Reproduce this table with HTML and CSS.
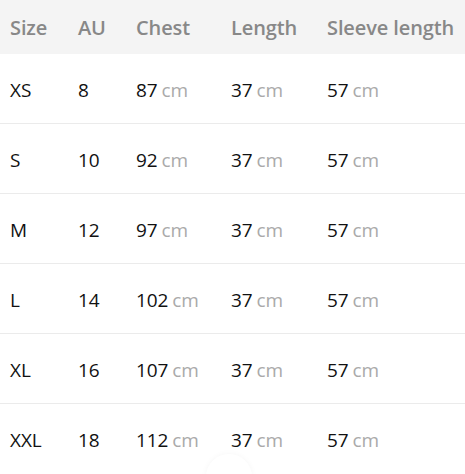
FILE: index.html
```html
<!DOCTYPE html>
<html lang="en">
<head>
    <meta charset="UTF-8">
    <meta name="viewport" content="width=device-width, initial-scale=1.0">
    <title>Size Guide</title>
    <link rel="stylesheet" href="styles.css">
</head>
<body>
    <div class="size-table">
        <div class="row head">
            <div>Size</div>
            <div>AU</div>
            <div>Chest</div>
            <div>Length</div>
            <div>Sleeve length</div>
        </div>
        <div class="row">
            <div>XS</div>
            <div>8</div>
            <div>87 <span class="unit">cm</span></div>
            <div>37 <span class="unit">cm</span></div>
            <div>57 <span class="unit">cm</span></div>
        </div>
        <div class="row">
            <div>S</div>
            <div>10</div>
            <div>92 <span class="unit">cm</span></div>
            <div>37 <span class="unit">cm</span></div>
            <div>57 <span class="unit">cm</span></div>
        </div>
        <div class="row">
            <div>M</div>
            <div>12</div>
            <div>97 <span class="unit">cm</span></div>
            <div>37 <span class="unit">cm</span></div>
            <div>57 <span class="unit">cm</span></div>
        </div>
        <div class="row">
            <div>L</div>
            <div>14</div>
            <div>102 <span class="unit">cm</span></div>
            <div>37 <span class="unit">cm</span></div>
            <div>57 <span class="unit">cm</span></div>
        </div>
        <div class="row">
            <div>XL</div>
            <div>16</div>
            <div>107 <span class="unit">cm</span></div>
            <div>37 <span class="unit">cm</span></div>
            <div>57 <span class="unit">cm</span></div>
        </div>
        <div class="row">
            <div>XXL</div>
            <div>18</div>
            <div>112 <span class="unit">cm</span></div>
            <div>37 <span class="unit">cm</span></div>
            <div>57 <span class="unit">cm</span></div>
        </div>
    </div>
    <div class="float-btn"></div>
</body>
</html>
```

FILE: styles.css
```css
body {
    margin: 0;
    padding: 0;
    background: #fff;
    font-family: "Open Sans", "Noto Sans", sans-serif;
    overflow: hidden;
}
.size-table {
    width: 465px;
}
.row {
    display: grid;
    grid-template-columns: 68px 58px 95px 96px 1fr;
    align-items: center;
    height: 70px;
    padding-left: 10px;
    padding-top: 2px;
    border-bottom: 1px solid #ebebeb;
    box-sizing: border-box;
    font-size: 19px;
    color: #111;
    white-space: nowrap;
    letter-spacing: -0.1px;
}
.row.head {
    height: 54px;
    padding-top: 0;
    background: #f4f4f4;
    border-bottom: none;
    color: #888;
    font-size: 20px;
    font-weight: 600;
    letter-spacing: -0.1px;
}
.row:last-child {
    border-bottom: none;
}
.unit {
    color: #aaa;
    margin-left: -1px;
}
.float-btn {
    position: fixed;
    left: 206px;
    bottom: -26px;
    width: 46px;
    height: 46px;
    border-radius: 50%;
    background: #fff;
    box-shadow: 0 0 6px rgba(0, 0, 0, 0.04);
}
```
